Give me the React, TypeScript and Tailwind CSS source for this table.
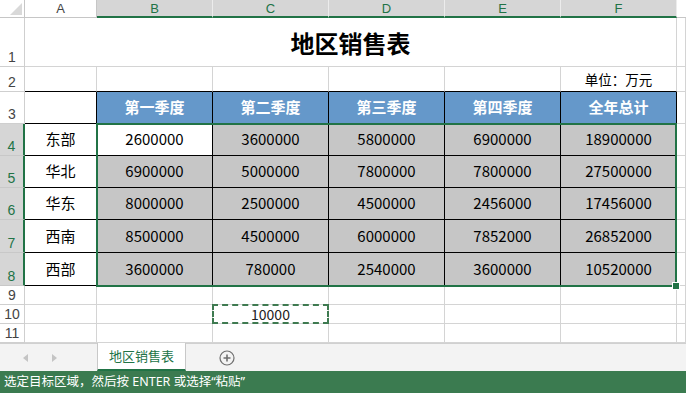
import React from "react";

const FONT = { fontFamily: '"Noto Sans CJK SC", "Noto Sans", sans-serif' };
const STATUS_FONT = { fontFamily: '"Noto Sans", "Noto Sans CJK SC", sans-serif' };
const HEAD_FONT = { fontFamily: '"Liberation Sans", Arial, sans-serif' };

const rows: [string, string[]][] = [
  ["东部", ["2600000", "3600000", "5800000", "6900000", "18900000"]],
  ["华北", ["6900000", "5000000", "7800000", "7800000", "27500000"]],
  ["华东", ["8000000", "2500000", "4500000", "2456000", "17456000"]],
  ["西南", ["8500000", "4500000", "6000000", "7852000", "26852000"]],
  ["西部", ["3600000", "780000", "2540000", "3600000", "10520000"]],
];

const quarters = ["第一季度", "第二季度", "第三季度", "第四季度", "全年总计"];

function RowHead({ n, sel }: { n: number; sel?: boolean }) {
  return (
    <div
      className={
        sel
          ? "flex items-end justify-center pb-[1px] bg-[#d6d6d6] text-[#217346] text-[14px] leading-[16px] border-b border-b-[#c8c8c8] border-r-2 border-r-[#217346]"
          : "flex items-end justify-center pb-[1px] bg-white text-[#444] text-[14px] leading-[16px] border-b border-r border-[#cfcfcf]"
      }
      style={HEAD_FONT}
    >
      {n}
    </div>
  );
}

function Blank() {
  return <div className="border-r border-b border-[#d4d4d4] bg-white" />;
}

export default function App() {
  return (
    <div className="w-[686px] h-[393px] overflow-hidden flex flex-col bg-white" style={FONT}>
      <div className="relative grid grid-cols-[25px_72px_116px_116px_116px_116px_116px_1fr] grid-rows-[18px_49px_25px_32px_32px_32px_32px_33px_33px_19px_19px_19px] h-[343px]">
        {/* header row */}
        <div className="relative bg-white border-r border-b border-[#c6c6c6]">
          <svg className="absolute left-[10px] top-[3px]" width="12" height="12" viewBox="0 0 12 12">
            <polygon points="12,0 12,12 0,12" fill="#d9d9d9" />
          </svg>
        </div>
        <div
          className="flex items-center justify-center bg-white text-[#444] text-[13px] leading-[15px] border-r border-b border-[#c6c6c6]"
          style={HEAD_FONT}
        >
          A
        </div>
        {["B", "C", "D", "E", "F"].map((c) => (
          <div
            key={c}
            className="flex items-center justify-center bg-[#d6d6d6] text-[#217346] text-[13px] leading-[15px] border-r border-r-[#ececec] border-b-2 border-b-[#217346]"
            style={HEAD_FONT}
          >
            {c}
          </div>
        ))}
        <div className="bg-white border-b border-[#c6c6c6]" />

        {/* row 1 */}
        <RowHead n={1} />
        <div className="col-span-6 flex items-center justify-center pt-[2px] border-r border-b border-[#d4d4d4] text-[24px] font-bold text-black">
          地区销售表
        </div>
        <Blank />

        {/* row 2 */}
        <RowHead n={2} />
        {[0, 1, 2, 3, 4].map((i) => (
          <div key={i} className="border-r border-b border-r-[#d4d4d4] border-b-black bg-white" />
        ))}
        <div className="flex items-center justify-center border-r border-b border-r-[#d4d4d4] border-b-black text-[13.5px] text-black">
          单位：万元
        </div>
        <Blank />

        {/* row 3 */}
        <RowHead n={3} />
        <div className="border-r border-b border-black bg-white" />
        {quarters.map((q) => (
          <div
            key={q}
            className="flex items-center justify-center bg-[#6598ca] border-r border-b border-black text-white font-bold text-[15px]"
          >
            {q}
          </div>
        ))}
        <Blank />

        {/* rows 4-8 */}
        {rows.map(([name, vals], ri) => (
          <React.Fragment key={name}>
            <RowHead n={ri + 4} sel />
            <div className="flex items-center justify-center bg-white border-r border-b border-black text-[15px] text-black">
              {name}
            </div>
            {vals.map((v, ci) => (
              <div
                key={ci}
                className={
                  ri === 0 && ci === 0
                    ? "flex items-center justify-center bg-white border-r border-b border-black text-[15px] text-black"
                    : "flex items-center justify-center bg-[#c6c6c6] border-r border-b border-black text-[15px] text-black"
                }
              >
                {v}
              </div>
            ))}
            <Blank />
          </React.Fragment>
        ))}

        {/* row 9 */}
        <RowHead n={9} />
        {[0, 1, 2, 3, 4, 5, 6].map((i) => (
          <Blank key={i} />
        ))}

        {/* row 10 */}
        <RowHead n={10} />
        <Blank />
        <Blank />
        <div className="relative border-r border-b border-[#d4d4d4] bg-white">
          <div className="absolute left-[-1px] top-[-1px] right-[-1px] bottom-[-1px] border-2 border-dashed border-[#3e7a50] flex items-center justify-center text-[14px] text-[#222]">
            10000
          </div>
        </div>
        <Blank />
        <Blank />
        <Blank />
        <Blank />

        {/* row 11 */}
        <RowHead n={11} />
        {[0, 1, 2, 3, 4, 5, 6].map((i) => (
          <Blank key={i} />
        ))}

        {/* selection overlay */}
        <div className="pointer-events-none absolute left-[96px] top-[123px] w-[581px] h-[164px] border-2 border-[#217346]" />
        <div className="pointer-events-none absolute left-[672px] top-[282px] w-[8px] h-[8px] bg-[#217346] border border-white" />
      </div>

      {/* tab bar */}
      <div className="h-[28px] flex items-stretch bg-[#f3f3f3] border-t border-[#d0d0d0]">
        <div className="w-[97px] flex items-center">
          <svg className="ml-[23px]" width="6" height="8" viewBox="0 0 6 8">
            <polygon points="5,0 5,8 0,4" fill="#c4c4c4" />
          </svg>
          <svg className="ml-[22px]" width="6" height="8" viewBox="0 0 6 8">
            <polygon points="1,0 1,8 6,4" fill="#c4c4c4" />
          </svg>
        </div>
        <div className="w-[89px] -mt-px flex items-center justify-center bg-white border-l border-r border-[#c8c8c8] border-b-2 border-b-[#217346] text-[13px] text-[#217346]">
          地区销售表
        </div>
        <div className="flex items-center pl-[33px]">
          <svg width="16" height="16" viewBox="0 0 16 16">
            <circle cx="8" cy="8" r="7" fill="none" stroke="#6f6f6f" strokeWidth="1.2" />
            <path d="M8 4.5v7M4.5 8h7" stroke="#6f6f6f" strokeWidth="1.6" />
          </svg>
        </div>
      </div>

      {/* status bar */}
      <div className="flex-1 flex items-center pl-[4px] bg-[#3b7b50] text-white text-[12.5px]" style={STATUS_FONT}>
        选定目标区域，然后按 ENTER 或选择“粘贴”
      </div>
    </div>
  );
}
